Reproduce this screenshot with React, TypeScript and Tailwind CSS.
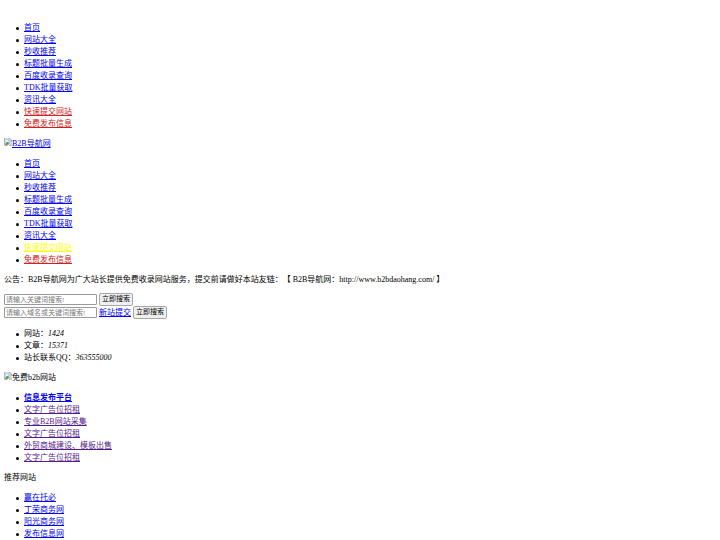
type NavItem = { label: string; color?: string; bold?: boolean };

const BLUE = "text-[#0000ee]";
const VISITED = "text-[#551a8b]";
const BULLET =
  "flex h-3 items-center gap-[5px] before:h-[3px] before:w-[3px] before:rounded-full before:bg-black before:content-['']";

const navItems: NavItem[] = [
  { label: "首页" },
  { label: "网站大全" },
  { label: "秒收推荐" },
  { label: "标题批量生成" },
  { label: "百度收录查询" },
  { label: "TDK批量获取" },
  { label: "资讯大全" },
];

const topNav: NavItem[] = [
  ...navItems,
  { label: "快速提交网站", color: "text-[#d02020]" },
  { label: "免费发布信息", color: "text-[#d02020]" },
];

const mainNav: NavItem[] = [
  ...navItems,
  { label: "快速提交网站", color: "text-[#ffff00]" },
  { label: "免费发布信息", color: "text-[#d02020]" },
];

const stats = [
  { label: "网站：", value: "1424" },
  { label: "文章：", value: "15371" },
  { label: "站长联系QQ：", value: "363555000" },
];

const adLinks: NavItem[] = [
  { label: "信息发布平台", bold: true },
  { label: "文字广告位招租", color: VISITED },
  { label: "专业B2B网站采集", color: VISITED },
  { label: "文字广告位招租", color: VISITED },
  { label: "外贸商城建设、模板出售", color: VISITED },
  { label: "文字广告位招租", color: VISITED },
];

const recommended: NavItem[] = [
  { label: "赢在托必" },
  { label: "丁荣商务网" },
  { label: "阳光商务网" },
  { label: "发布信息网" },
];

function LinkList({ items }: { items: NavItem[] }) {
  return (
    <ul className="pl-3">
      {items.map((item, i) => (
        <li key={i} className={BULLET}>
          <a href="#" className={`underline ${item.color ?? BLUE} ${item.bold ? "font-bold" : ""}`}>
            {item.label}
          </a>
        </li>
      ))}
    </ul>
  );
}

function BrokenImage() {
  return (
    <svg viewBox="0 0 16 16" className="h-2 w-2 shrink-0" aria-hidden="true">
      <path d="M1 0h10l4 4v4L6 15H1z" fill="#fff" stroke="#9a9a9a" strokeWidth="1.5" />
      <path d="M2.5 2H10v4h4v1.500L6 13H2.500z" fill="#b9d0f5" />
      <path d="M4 6a2 2 0 0 1 3.500-1A1.500 1.500 0 0 1 8 7.500H4z" fill="#fff" />
      <path d="M2.500 13c1-3 3-5 5-5l3 2-4.500 4H2.500z" fill="#4c9f3c" />
      <path d="M10.500 0.500v4.500H15z" fill="#fff" stroke="#9a9a9a" />
      <path d="M15 11v4h-5z" fill="#dfe8dc" stroke="#9a9a9a" />
    </svg>
  );
}

function SearchForm({ placeholder, submitLink }: { placeholder: string; submitLink?: string }) {
  return (
    <form className="flex h-[13px] items-center" onSubmit={(e) => e.preventDefault()}>
      <input
        type="text"
        aria-label={placeholder}
        placeholder={placeholder}
        className="mr-0.5 h-[11px] w-[93px] rounded-[1px] border border-[#9a9a9a] bg-white px-px text-[7px] leading-[9px] placeholder:text-[#757575]"
      />
      {submitLink && (
        <a href="#" className={`mr-0.5 underline ${BLUE}`}>
          {submitLink}
        </a>
      )}
      <button
        type="submit"
        className="h-[13px] rounded-[2px] border border-[#a8a8a8] bg-[#efefef] px-0.5 text-[7px] leading-[11px] whitespace-nowrap"
      >
        立即搜索
      </button>
    </form>
  );
}

export default function App() {
  return (
    <div className="flex flex-col gap-2 bg-white px-1 pt-[22px] font-['Liberation_Serif','Noto_Sans_CJK_SC',serif] text-[8px] leading-3 text-black [text-spacing-trim:space-all]">
      <nav>
        <LinkList items={topNav} />
      </nav>

      <a href="#" className={`flex self-start underline ${BLUE}`}>
        <BrokenImage />
        B2B导航网
      </a>

      <nav>
        <LinkList items={mainNav} />
      </nav>

      <div className="flex flex-col gap-[7px] pb-px">
        <p>公告：B2B导航网为广大站长提供免费收录网站服务，提交前请做好本站友链：【 B2B导航网：http://www.b2bdaohang.com/ 】</p>
        <div>
          <SearchForm placeholder="请输入关键词搜索!" />
          <SearchForm placeholder="请输入域名或关键词搜索!" submitLink="新站提交" />
        </div>
      </div>

      <ul className="pl-3">
        {stats.map((s) => (
          <li key={s.label} className={BULLET}>
            <span>
              {s.label}
              <em>{s.value}</em>
            </span>
          </li>
        ))}
      </ul>

      <div className="flex">
        <BrokenImage />
        免费b2b网站
      </div>

      <LinkList items={adLinks} />

      <p>推荐网站</p>

      <LinkList items={recommended} />
    </div>
  );
}
